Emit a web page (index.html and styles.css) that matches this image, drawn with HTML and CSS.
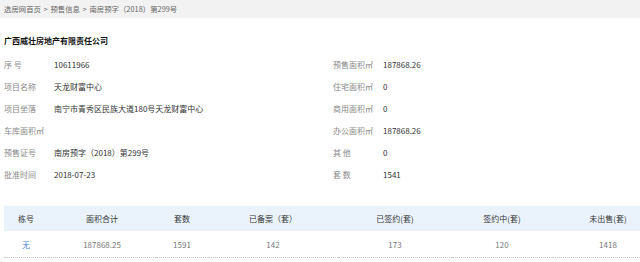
FILE: index.html
```html
<!DOCTYPE html>
<html lang="zh-CN">
<head>
    <meta charset="UTF-8">
    <meta name="viewport" content="width=device-width, initial-scale=1.0">
    <title>南房预字（2018）第299号</title>
    <link rel="stylesheet" href="styles.css">
</head>
<body>

    <!-- Breadcrumb -->
    <div class="crumb">
        <a href="#">选房网首页</a> &gt; <a href="#">预售信息</a> &gt; <span>南房预字（2018）第299号</span>
    </div>

    <h1 class="company">广西威壮房地产有限责任公司</h1>

    <!-- Presale info -->
    <div class="info">
        <div class="row"><span class="label">序 号</span><span class="value">10611966</span></div>
        <div class="row"><span class="label">预售面积㎡</span><span class="value">187868.26</span></div>

        <div class="row"><span class="label">项目名称</span><span class="value">天龙财富中心</span></div>
        <div class="row"><span class="label">住宅面积㎡</span><span class="value">0</span></div>

        <div class="row"><span class="label">项目坐落</span><span class="value">南宁市青秀区民族大道180号天龙财富中心</span></div>
        <div class="row"><span class="label">商用面积㎡</span><span class="value">0</span></div>

        <div class="row"><span class="label">车库面积㎡</span><span class="value"></span></div>
        <div class="row"><span class="label">办公面积㎡</span><span class="value">187868.26</span></div>

        <div class="row"><span class="label">预售证号</span><span class="value">南房预字（2018）第299号</span></div>
        <div class="row"><span class="label">其 他</span><span class="value">0</span></div>

        <div class="row"><span class="label">批准时间</span><span class="value">2018-07-23</span></div>
        <div class="row"><span class="label">套 数</span><span class="value">1541</span></div>
    </div>

    <!-- Building table -->
    <div class="table-wrap">
        <table class="buildings">
            <colgroup>
                <col class="c1"><col class="c2"><col class="c3"><col class="c4"><col class="c5"><col class="c6"><col class="c7">
            </colgroup>
            <thead>
                <tr>
                    <th>栋号</th>
                    <th>面积合计</th>
                    <th>套数</th>
                    <th>已备案（套）</th>
                    <th>已签约(套)</th>
                    <th>签约中(套)</th>
                    <th>未出售(套)</th>
                </tr>
            </thead>
            <tbody>
                <tr>
                    <td><a href="#">无</a></td>
                    <td>187868.25</td>
                    <td>1591</td>
                    <td>142</td>
                    <td>173</td>
                    <td>120</td>
                    <td>1418</td>
                </tr>
            </tbody>
        </table>
    </div>

</body>
</html>
```

FILE: styles.css
```css
/* General styles */
body {
    margin: 0;
    font-family: "Noto Sans CJK SC", "Liberation Sans", sans-serif;
    font-size: 8px;
    color: #333;
    background-color: #fff;
    overflow: hidden;
}
a {
    text-decoration: none;
    color: inherit;
}

/* Breadcrumb */
.crumb {
    height: 18px;
    line-height: 18px;
    padding-left: 4px;
    font-size: 7.4px;
    word-spacing: 1px;
    color: #666;
    background-color: #f2f2f2;
}

/* Company name */
.company {
    margin: 15px 0 5px 4px;
    font-size: 8px;
    line-height: 16px;
    font-weight: bold;
    color: #111;
}

/* Info grid */
.info {
    display: grid;
    grid-template-columns: 329px 1fr;
    padding-left: 4px;
}
.row {
    display: flex;
    height: 22px;
    line-height: 22px;
}
.label {
    width: 50px;
    color: #888;
}
.value {
    color: #333;
}

/* Table */
.table-wrap {
    margin: 20px 0 0 4px;
    overflow: hidden;
}
.buildings {
    width: 660px;
    table-layout: fixed;
    border-collapse: collapse;
}
.c1 { width: 44px; }
.c2 { width: 108px; }
.c3 { width: 52px; }
.c4 { width: 130px; }
.c5 { width: 114px; }
.c6 { width: 100px; }
.c7 { width: 112px; }
.buildings th {
    height: 25px;
    padding: 0;
    font-weight: normal;
    color: #333;
    background-color: #eaf3fc;
}
.buildings td {
    height: 26px;
    padding: 0;
    text-align: center;
    color: #777;
    border-bottom: 1px dotted #c8c8c8;
}
.buildings td a {
    color: #4a86d8;
}
```
